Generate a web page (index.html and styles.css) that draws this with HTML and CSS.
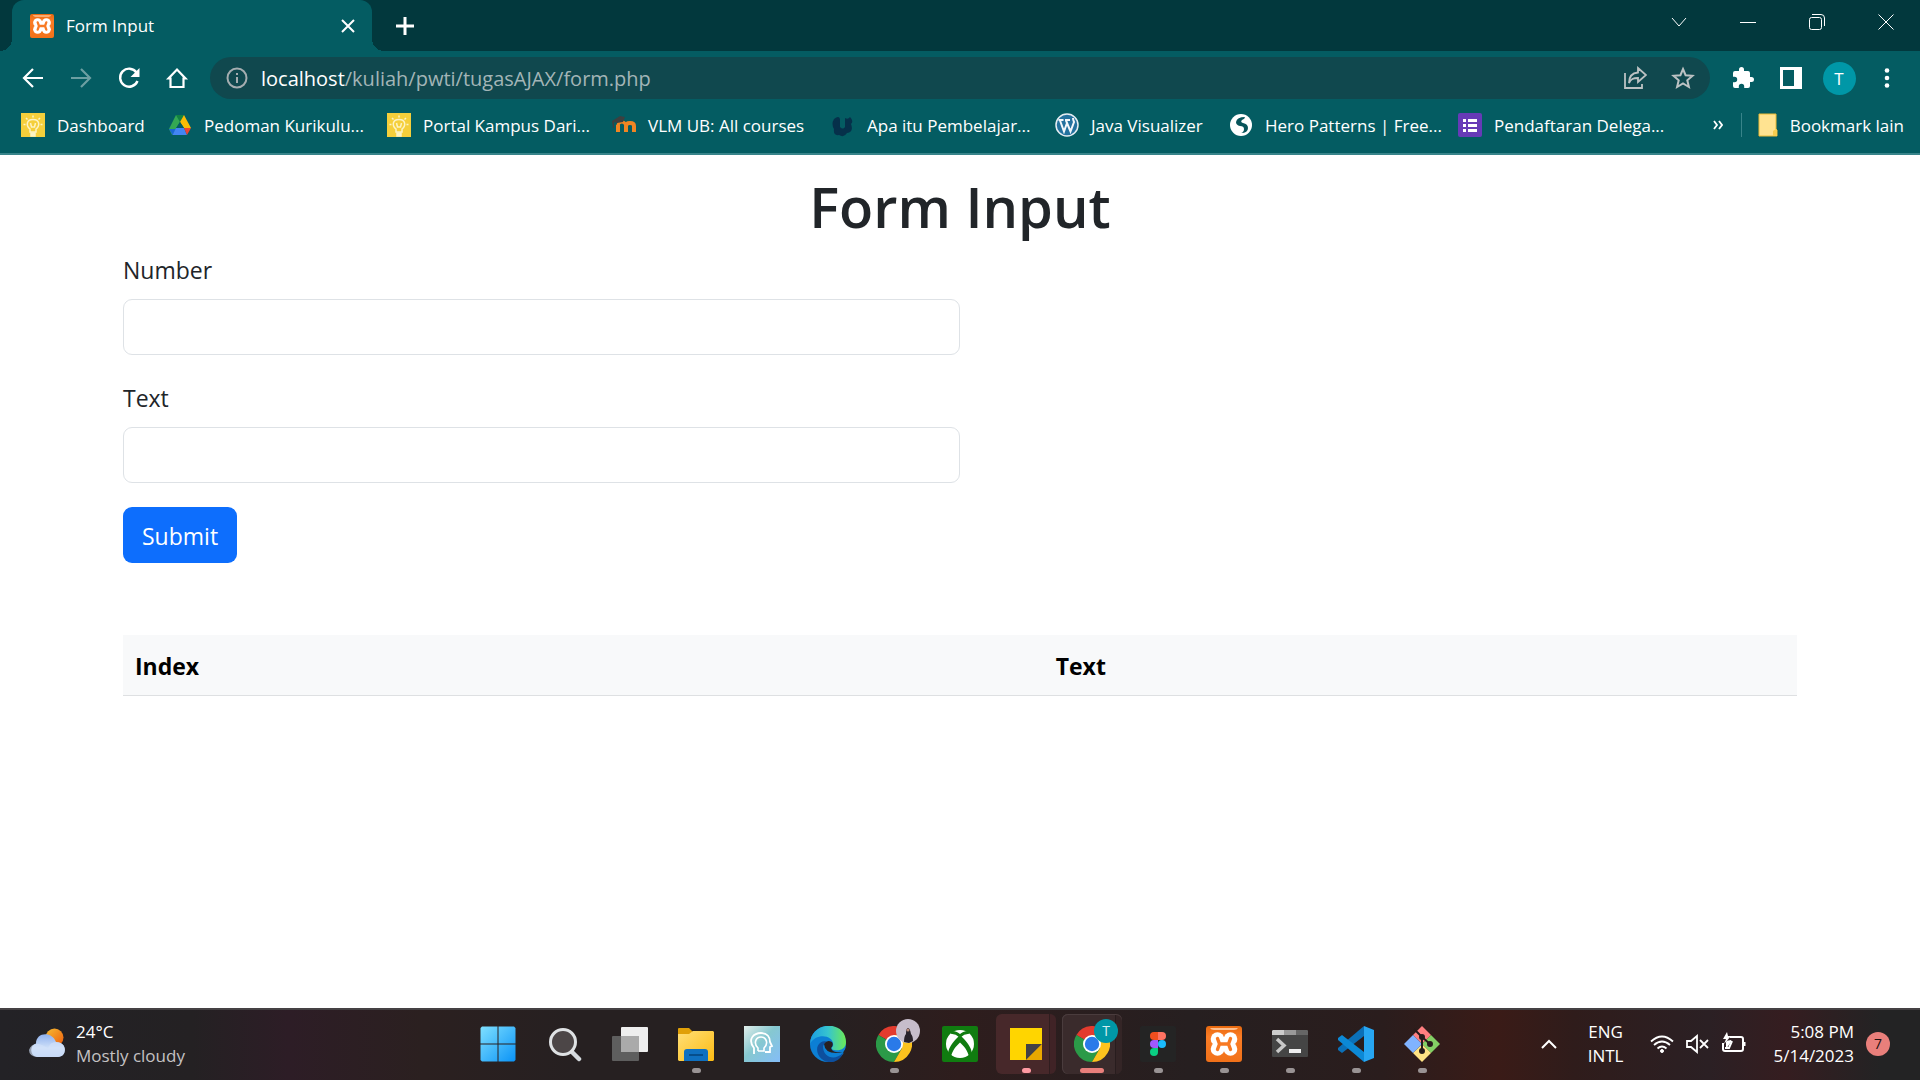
FILE: index.html
```html
<!DOCTYPE html>
<html lang="id">
<head>
<meta charset="utf-8">
<meta name="viewport" content="width=device-width, initial-scale=1">
<title>Form Input</title>
<link rel="stylesheet" href="styles.css">
</head>
<body>
<svg class="defs" aria-hidden="true">
  <defs>
    <linearGradient id="win" x1="0" y1="0" x2="1" y2="1"><stop offset="0" stop-color="#7fe0ff"/><stop offset="1" stop-color="#0a93f7"/></linearGradient>
    <linearGradient id="sun" x1="0" y1="0" x2="1" y2="1"><stop offset="0" stop-color="#f5bd33"/><stop offset="1" stop-color="#ee5b0c"/></linearGradient>
    <linearGradient id="cloud" x1="0" y1="0" x2="0" y2="1"><stop offset="0" stop-color="#8fb1ee"/><stop offset=".6" stop-color="#cfe0f8"/><stop offset="1" stop-color="#b3cbf3"/></linearGradient>
    <linearGradient id="folder" x1="0" y1="0" x2="1" y2="1"><stop offset="0" stop-color="#ffdf77"/><stop offset="1" stop-color="#fdbb13"/></linearGradient>
    <linearGradient id="head" x1="0" y1="0" x2="1" y2="1"><stop offset="0" stop-color="#e2eeea"/><stop offset=".45" stop-color="#86c8d0"/><stop offset="1" stop-color="#84bdf8"/></linearGradient>
    <linearGradient id="edgeTop" x1="0" y1="0" x2="1" y2="0"><stop offset="0" stop-color="#1b9de2"/><stop offset=".5" stop-color="#36c4cf"/><stop offset="1" stop-color="#6bea57"/></linearGradient>
    <linearGradient id="orange" x1="0" y1="0" x2="0" y2="1"><stop offset="0" stop-color="#e8690f"/><stop offset=".3" stop-color="#fb7d26"/><stop offset="1" stop-color="#f17119"/></linearGradient>
    <symbol id="bulb" viewBox="0 0 24 24">
      <rect width="24" height="24" fill="#f5cf3b"/>
      <g fill="none" stroke="#fdf3c4" stroke-width="1.5"><path d="M9 19v-3C5 13 5 6.500 12 6.500S19 13 15 16v3zM9.500 10l1 4h3l1-4M12 2.500v2M5 5l1.500 1.500M19 5l-1.500 1.500M2.500 11.500h2M19.500 11.500h2"/><path d="M10 20h4v3h-4z" fill="#fdf3c4"/></g>
    </symbol>
    <symbol id="chrome" viewBox="0 0 36 36">
      <path d="M18 18 2.400 9A18 18 0 0 1 33.600 9z" fill="#e33b2e"/>
      <path d="M18 18 2.400 9A18 18 0 0 0 18 36L25.800 22.500z" fill="#2b9a48"/>
      <path d="M18 9H33.600A18 18 0 0 1 18 36L25.800 22.500z" fill="#fcc31e"/>
      <circle cx="18" cy="18" r="9" fill="#fff"/><circle cx="18" cy="18" r="7.200" fill="#2a7ae9"/>
    </symbol>
    <symbol id="xampp" viewBox="0 0 36 36">
      <rect width="36" height="36" rx="3" fill="url(#orange)"/><path d="M4 2h28q-1 2-4 2H8q-3 0-4-2z" fill="#ffc08f"/>
      <g fill="#fff"><circle cx="11.500" cy="13" r="6.800"/><circle cx="24.500" cy="13" r="6.800"/><circle cx="11.500" cy="23" r="6.800"/><circle cx="24.500" cy="23" r="6.800"/><path d="M12 11h12v14H12z"/></g>
      <path d="M11.500 12.500 13.500 18l-2 5.500M24.500 12.500l-2 5.500 2 5.500M13.500 18h9" fill="none" stroke="#f87a24" stroke-width="3.400" stroke-linecap="round" stroke-linejoin="round"/>
    </symbol>
  </defs>
</svg>

<header class="browser">
  <div class="tabstrip">
    <div class="tab">
      <svg class="i24" aria-hidden="true"><use href="#xampp"/></svg>
      <span class="tab-title">Form Input</span>
      <button class="tab-close" aria-label="Tutup tab"><svg width="14" height="14" viewBox="0 0 14 14" stroke="#fff" stroke-width="2"><path d="m1 1 12 12M13 1 1 13"/></svg></button>
    </div>
    <button class="new-tab" aria-label="Tab baru"><svg width="18" height="18" viewBox="0 0 18 18" stroke="#fff" stroke-width="3"><path d="M9 0v18M0 9h18"/></svg></button>
    <div class="window-controls">
      <button aria-label="Telusuri tab"><svg width="16" height="16" viewBox="0 0 16 16"><path d="m1 4 7 8 7-8"/></svg></button>
      <button aria-label="Minimalkan"><svg width="16" height="16" viewBox="0 0 16 16"><path d="M0 8.500h16"/></svg></button>
      <button aria-label="Pulihkan"><svg width="16" height="16" viewBox="0 0 16 16"><rect x=".5" y="3.500" width="12" height="12" rx="2"/><path d="M3 .5h9q3.500 0 3.500 3.500v8"/></svg></button>
      <button aria-label="Tutup"><svg width="16" height="16" viewBox="0 0 16 16"><path d="m.5.500 15 15M15.500.500l-15 15"/></svg></button>
    </div>
  </div>

  <div class="toolbar">
    <div class="tools">
      <button aria-label="Kembali"><svg width="24" height="24" viewBox="0 0 24 24" fill="none" stroke="#fff" stroke-width="2.200"><path d="M22 12H3M12 3l-9 9 9 9"/></svg></button>
      <button aria-label="Maju"><svg width="24" height="24" viewBox="0 0 24 24" fill="none" stroke="#6c9fa2" stroke-width="2.200"><path d="M2 12h19M12 3l9 9-9 9"/></svg></button>
      <button aria-label="Muat ulang"><svg width="24" height="24" viewBox="0 0 24 24" fill="none" stroke="#fff" stroke-width="2.400"><path d="M19.500 6.500A9 9 0 1 0 20.500 15"/><path d="M22.500 2v9h-9z" fill="#fff" stroke="none"/></svg></button>
      <button aria-label="Beranda"><svg width="24" height="24" viewBox="0 0 24 24" fill="none" stroke="#fff" stroke-width="2.200"><path d="M3.500 12.500h2v8.500h13v-8.500h2L12 3.500z"/></svg></button>
    </div>
    <div class="omnibox">
      <svg width="22" height="22" viewBox="0 0 22 22" fill="none" stroke="#a5adb0" stroke-width="2" aria-hidden="true"><circle cx="11" cy="11" r="9.500"/><path d="M11 10v6M11 6v2"/></svg>
      <span class="url"><span class="host">localhost</span>/kuliah/pwti/tugasAJAX/form.php</span>
      <button aria-label="Bagikan"><svg width="24" height="24" viewBox="0 0 24 24" fill="none" stroke="#bcc2c3" stroke-width="1.800"><path d="M2 7v15h17v-4M15 2l8 7-8 7v-4c-5 0-7 1-9 5 0-6 3-10 9-10.500z"/></svg></button>
      <button aria-label="Tandai halaman"><svg width="24" height="24" viewBox="0 0 24 24" fill="none" stroke="#bcc2c3" stroke-width="2"><path d="m12 3 2.600 6.200 6.900.600-5.200 4.500 1.600 6.700-5.900-3.600L6.100 21l1.600-6.700-5.200-4.500 6.900-.600z"/></svg></button>
    </div>
    <div class="tools">
      <button aria-label="Ekstensi"><svg width="24" height="24" viewBox="0 0 24 24" fill="#fff"><path d="M20.500 11H19V7a2 2 0 0 0-2-2h-4V3.500a2.500 2.500 0 0 0-5 0V5H4a2 2 0 0 0-2 2v3.800h1.500a2.700 2.700 0 0 1 0 5.400H2V20a2 2 0 0 0 2 2h3.800v-1.500a2.700 2.700 0 0 1 5.400 0V22H17a2 2 0 0 0 2-2v-4h1.500a2.500 2.500 0 0 0 0-5z"/></svg></button>
      <button aria-label="Panel samping"><svg width="22" height="22" viewBox="0 0 22 22"><path fill="#fff" fill-rule="evenodd" d="M0 0h22v22H0zm3 3v16h11V3z"/></svg></button>
      <button aria-label="Profil"><span class="avatar">T</span></button>
      <button aria-label="Menu"><svg width="6" height="20" viewBox="0 0 6 20" fill="#fff"><circle cx="3" cy="2.500" r="2.300"/><circle cx="3" cy="10" r="2.300"/><circle cx="3" cy="17.500" r="2.300"/></svg></button>
    </div>
  </div>

  <nav class="bookmarks">
    <div class="bookmark-list">
      <a href="#"><svg class="i24"><use href="#bulb"/></svg>Dashboard</a>
      <a href="#"><svg class="i24" viewBox="0 0 24 24"><path d="M8 2h8l-4 7z" fill="#128240"/><path d="M8 2l4 7-8 13-3-6z" fill="#34a853"/><path d="M16 2l7 13h-7l-4-6z" fill="#fbbc05"/><path d="M1 16h7l-3.500 6z" fill="#1967d2"/><path d="M12 9l4 6H8z" fill="#045c62"/><path d="M8 15h8l3 7H4.500z" fill="#4285f4"/><path d="M16 15h7l-4 7z" fill="#ea4335"/></svg>Pedoman Kurikulu...</a>
      <a href="#"><svg class="i24"><use href="#bulb"/></svg>Portal Kampus Dari...</a>
      <a href="#"><svg class="i24" viewBox="0 0 24 24"><path d="M6 19v-7M14 19v-6q0-3 4-3t4 3v6" fill="none" stroke="#ef8523" stroke-width="4"/><path d="M6 14v-2q1-3 4-3t4 4" fill="none" stroke="#ef8523" stroke-width="3"/><path d="m0 8 8-5 5 1-2 5-6 1-3-1v6H1z" fill="#3c4040"/></svg>VLM UB: All courses</a>
      <a href="#"><svg class="i24" viewBox="0 0 24 24"><path d="M3 6q5-4 6 0v8q3 3 5 0V5q3 2 5-1 4 4 1 7 3 8-4 9-3 5-8 2-6 1-5-6-3-5 0-10z" fill="#06304a"/></svg>Apa itu Pembelajar...</a>
      <a href="#"><svg class="i24" viewBox="0 0 24 24"><circle cx="12" cy="12" r="11" fill="#23719e" stroke="#e5edf2" stroke-width="1.500"/><path d="M3.500 7h5M10 7h5M5 7.500 9 18.500 12 10M11 7.500 15.500 18.500 19 9q-1-2-1-4" fill="none" stroke="#f2f7fa" stroke-width="2"/></svg>Java Visualizer</a>
      <a href="#"><svg class="i24" viewBox="0 0 24 24"><circle cx="12" cy="12" r="11" fill="#fff"/><path d="M16 4q-8 0-9 5 0 3 4 4 4 0 4 3t-3 4q7 0 7-5 0-4-5-5-3-1-1-3 3-1 3-3z" fill="#07545a"/></svg>Hero Patterns | Free...</a>
      <a href="#"><svg class="i24" viewBox="0 0 24 24"><rect width="24" height="24" rx="2" fill="#673ab7"/><path d="M5 7.500h3M10 7.500h9M5 12.500h3M10 12.500h9M5 17.500h3M10 17.500h9" stroke="#fff" stroke-width="3"/></svg>Pendaftaran Delega...</a>
    </div>
    <button class="more" aria-label="Bookmark lainnya"><svg width="10" height="10" viewBox="0 0 10 10" fill="none" stroke="#fff" stroke-width="1.800"><path d="m1 1 3 4-3 4M6 1l3 4-3 4"/></svg></button>
    <a class="other" href="#"><svg width="20" height="24" viewBox="0 0 20 24"><path d="M1 1h17v15l1 1v6H1z" fill="#ffe391" stroke="#edbb35"/><path d="M15 23v-5l3-2 1 1v6z" fill="#f8cd4e"/></svg>Bookmark lain</a>
  </nav>
</header>

<main class="page">
  <div class="container">
    <h1>Form Input</h1>
    <form>
      <div class="field"><label for="number">Number</label><input id="number" type="number"></div>
      <div class="field"><label for="text">Text</label><input id="text" type="text"></div>
      <button class="submit" type="button">Submit</button>
    </form>
    <table>
      <thead><tr><th class="col-index" scope="col">Index</th><th scope="col">Text</th></tr></thead>
    </table>
  </div>
</main>

<footer class="taskbar">
  <div class="weather">
    <svg width="36" height="36" viewBox="0 0 36 36" aria-hidden="true"><circle cx="25.500" cy="11.500" r="9" fill="url(#sun)"/><path d="M8 31a7 7 0 0 1-1-13.500C7 6 23 5 27 16c12 0 11 15 2 15z" fill="url(#cloud)"/><path d="M19 22q2-6 8-6c12 0 11 15 2 15H8q-8-1-8-7 2-7 10-6 6 2 8 4z" fill="#d3e2f9" opacity=".65"/></svg>
    <div><div>24°C</div><div class="dim">Mostly cloudy</div></div>
  </div>

  <div class="apps">
    <button aria-label="Start"><svg class="i36" viewBox="0 0 36 36" fill="url(#win)"><path d="M2 .5h15.500v17H.5V2zM18.500.500H34L35.500 2v15.500h-17zM.5 18.500h17v17H2L.5 34zM18.500 18.500h17V34L34 35.500H18.500z"/></svg></button>
    <button aria-label="Search"><svg class="i36" viewBox="0 0 36 36"><path d="m25 25 8 8" stroke="#d5dade" stroke-width="4.500" stroke-linecap="round"/><circle cx="17" cy="16" r="12.500" fill="#4c4647" stroke="#dfe2e4" stroke-width="3"/></svg></button>
    <button aria-label="Task view"><svg class="i36" viewBox="0 0 36 36"><rect x="9" y="1" width="27" height="25" rx="1" fill="#eee"/><rect y="10" width="27" height="25" rx="1" fill="#666" opacity=".88"/><path d="M9 10h18v16H9z" fill="#aaa"/></svg></button>
    <button class="running" aria-label="File Explorer"><svg class="i36" viewBox="0 0 36 36"><path d="M0 3q0-1 1-1h10l4 4-3 4H0z" fill="#e0a008"/><path d="M0 8h11l4-3h20l1 1v28l-1 1H1l-1-1z" fill="url(#folder)"/><path d="M6 35V26q0-3 3-3h18q3 0 3 3v9z" fill="#0f70c0"/><path d="M11 29h14" stroke="#064e8c" stroke-width="2"/></svg></button>
    <button aria-label="Assistant"><svg class="i36" viewBox="0 0 36 36"><path d="M0 0h36v36H0z" fill="url(#head)"/><path d="M10 28v-6C3 13 10 7 17 7c6 0 9 4 9 9l2 4-2 1v5h-5" fill="none" stroke="#fff" stroke-width="1.800"/><path d="M14 25v-3c-5-5-2-11 3-11s8 6 3 11v3h-6" fill="none" stroke="#fff" stroke-width="1.600"/></svg></button>
    <button aria-label="Edge"><svg class="i36" viewBox="0 0 36 36"><circle cx="18" cy="18" r="18" fill="#0c7fd4"/><path d="M13 20c0 12 12 15 20 7-4 12-20 12-25 1-3-8 2-13 8-13z" fill="#0d4f9e"/><path d="M0 18C1-6 36-6 36 16c0 7-6 9-12 8-3-1-3-2-1-4C25 9 6 6 0 18z" fill="url(#edgeTop)"/><path d="M14 18q3-5 8-2 2 3-1 6 1 5 12 4.500l3-4.500v6l-3-1.500q-18 3-19-8.500z" fill="#272022"/></svg></button>
    <button class="running" aria-label="Chrome"><svg class="i36"><use href="#chrome"/></svg><svg class="profile" viewBox="0 0 24 24"><circle cx="12" cy="12" r="12" fill="#c7bdcb"/><path d="M8 23q0-6 2-8 0-6 2-6t3 6q2 2 2 7l-4 2z" fill="#29222a"/><circle cx="12" cy="11" r="1.500" fill="#ba8c7a"/></svg></button>
    <button aria-label="Xbox"><svg class="i36" viewBox="0 0 36 36"><rect width="36" height="36" rx="2" fill="#107c10"/><circle cx="18" cy="18" r="14" fill="#fff"/><path d="M9 6.500c4-.5 6.500 1 9 3.500 2.500-2.500 5-4 9-3.500" fill="none" stroke="#107c10" stroke-width="3"/><path d="M18 9l4 4c5 5 8 11 8 15l-3 3c-1-6-5-11-9-14.500C14 20 10 25 9 31l-3-3c0-4 3-10 8-15z" fill="#107c10"/></svg></button>
    <button class="running grouped sticky" aria-label="Sticky Notes"><svg class="i36" viewBox="0 0 36 36"><path d="M2 2h32v16l-16 16H2z" fill="#ffd500"/><path d="M18 34V18h16z" fill="#434245"/><path d="M34 18v16H18z" fill="#e9a800"/></svg></button>
    <button class="running grouped active" aria-label="Chrome, T"><svg class="i36"><use href="#chrome"/></svg><span class="profile letter">T</span></button>
    <button class="running" aria-label="Figma"><svg class="i36" viewBox="0 0 36 36"><rect width="36" height="36" rx="2" fill="#242424"/><path d="M18 6h-4a4 4 0 0 0 0 8h4z" fill="#f24e1e"/><path d="M18 6h4a4 4 0 0 1 0 8h-4z" fill="#ff7262"/><path d="M18 14h-4a4 4 0 0 0 0 8h4z" fill="#a259ff"/><circle cx="22" cy="18" r="4" fill="#1abcfe"/><path d="M18 22h-4a4 4 0 1 0 4 4z" fill="#0acf83"/></svg></button>
    <button class="running" aria-label="XAMPP"><svg class="i36"><use href="#xampp"/></svg></button>
    <button class="running" aria-label="Terminal"><svg class="i36" viewBox="0 0 36 36"><rect y="4" width="36" height="27" rx="1" fill="#454545"/><path d="M0 9V5l1-1h11v5z" fill="#ccc"/><path d="M12 4h12v5H12z" fill="#999"/><path d="M24 4h11l1 1v4H24z" fill="#666"/><path d="m5 13 7 6.500L5 26" fill="none" stroke="#c8c8c8" stroke-width="3.500"/><path d="M17 25h12" stroke="#eee" stroke-width="4"/></svg></button>
    <button class="running" aria-label="Visual Studio Code"><svg class="i36" viewBox="0 0 36 36"><path d="M26 10 4 27l-4-3v-2L26 0z" fill="#0b70b8"/><path d="M26 26 4 9l-4 3v2l26 22z" fill="#0c89d6"/><path d="m26 0 10 4v28l-10 4z" fill="#27a6f2"/></svg></button>
    <button class="running" aria-label="Git"><svg class="i36" viewBox="0 0 36 36"><path d="m18 0 9 9-9 9-9-9z" fill="#ff7f80"/><path d="m27 9 9 9-9 9-9-9z" fill="#83d064"/><path d="m18 18 9 9-9 9-9-9z" fill="#ffe384"/><path d="m9 9 9 9-9 9-9-9z" fill="#80b3ff"/><g fill="#271c1c" stroke="#271c1c" stroke-width="2"><path d="m10 3 8 8v14M18 11l8 7" fill="none"/><circle cx="18" cy="11" r="2"/><circle cx="18" cy="25" r="2"/><circle cx="26" cy="18" r="2"/></g></svg></button>
  </div>

  <div class="tray">
    <button class="chevron" aria-label="Ikon tersembunyi"><svg width="16" height="10" viewBox="0 0 16 10" fill="none" stroke="#fff" stroke-width="2"><path d="m1 9 7-7 7 7"/></svg></button>
    <div class="lang">ENG<br>INTL</div>
    <div class="status">
      <svg class="i24" viewBox="0 0 24 24" fill="none" stroke="#fff" stroke-width="1.800"><path d="M1 9.500q11-10 22 0M4 13q8-7 16 0M7.500 16.500q4.500-4 9 0"/><circle cx="12" cy="19" r="1.500" fill="#fff" stroke-width="1"/></svg>
      <svg class="i24" viewBox="0 0 24 24" fill="none" stroke="#fff" stroke-width="1.800"><path d="M1 9h4l6-5v16l-6-5H1zM14 8l8 8M22 8l-8 8"/></svg>
      <svg class="i24" viewBox="0 0 24 24" fill="none" stroke="#fff" stroke-width="2"><path d="M8 5h11q2 0 2 2v10q0 2-2 2H3q-2 0-2-2v-6"/><path d="M4 16V9l5-1v2l-5 7zM5 0 1 7h3L2 12l7-8H6z" fill="#fff" stroke="none"/><path d="M22.500 10v4M3 16h4l3-7"/></svg>
    </div>
    <div class="clock">5:08 PM<br>5/14/2023</div>
    <span class="badge">7</span>
  </div>
</footer>
</body>
</html>
```

FILE: styles.css
```css
* { box-sizing: border-box; }

body {
  margin: 0;
  min-height: 100vh;
  display: flex;
  flex-direction: column;
  background: #fff;
  color: #212529;
  font-family: "Open Sans", "Noto Sans", sans-serif;
}

button {
  margin: 0;
  padding: 0;
  border: 0;
  background: none;
  font: inherit;
  color: inherit;
}

svg { display: block; flex: none; }
a { color: inherit; text-decoration: none; }
.defs { position: absolute; width: 0; height: 0; }
.i24 { width: 24px; height: 24px; }
.i36 { width: 36px; height: 36px; }

/* Browser frame */
.browser {
  background: #045c62;
  border-bottom: 2px solid #38848a;
  color: #fff;
  font-size: 17px;
}

.tabstrip {
  display: flex;
  height: 51px;
  padding-left: 12px;
  background: #02383d;
}

.tab {
  position: relative;
  display: flex;
  align-items: center;
  gap: 12px;
  width: 360px;
  padding: 0 17px 0 18px;
  border-radius: 12px 12px 0 0;
  background: #045c62;
}

.tab::before,
.tab::after {
  content: "";
  position: absolute;
  bottom: 0;
  width: 12px;
  height: 12px;
}
.tab::before { right: 100%; background: radial-gradient(circle at 0 0, #02383d 12px, #045c62 12px); }
.tab::after { left: 100%; background: radial-gradient(circle at 100% 0, #02383d 12px, #045c62 12px); }

.tab-title { flex: 1; }
.new-tab { padding: 0 24px; }

.window-controls {
  display: flex;
  height: 43px;
  margin-left: auto;
}
.window-controls button {
  display: grid;
  place-items: center;
  width: 69px;
}
.window-controls svg { fill: none; stroke: #fff; }

.toolbar {
  display: flex;
  align-items: center;
  gap: 9px;
  padding: 6px 9px;
}
.tools { display: flex; }
.tools button {
  display: grid;
  place-items: center;
  width: 48px;
  height: 42px;
}
.avatar {
  display: grid;
  place-items: center;
  width: 33px;
  height: 33px;
  border-radius: 50%;
  background: #0097a7;
}

.omnibox {
  flex: 1;
  display: flex;
  align-items: center;
  gap: 24px;
  height: 42px;
  padding: 0 15px 0 16px;
  border-radius: 21px;
  background: #10484e;
}
.url {
  flex: 1;
  margin-left: -11px;
  color: #a3b5b7;
  font-size: 20px;
}
.host { color: #fff; }

.bookmarks {
  display: flex;
  align-items: center;
  height: 48px;
  padding: 0 16px 8px 21px;
}
.bookmark-list {
  flex: 1;
  display: grid;
  grid-template-columns: 147px 219px 225px 219px 224px 174px 229px auto;
  white-space: nowrap;
}
.bookmarks a {
  display: flex;
  align-items: center;
  gap: 12px;
}
.more { padding: 0 18px 0 16px; }
.bookmarks .other {
  padding-left: 16px;
  border-left: 1px solid #38848a;
  white-space: nowrap;
}

/* Web page */
.page { flex: 1; padding: 15px 24px; }
.container { max-width: 1674px; margin: 0 auto; }

h1 {
  margin: 0 0 9px;
  font-size: 56px;
  font-weight: 600;
  line-height: 72px;
  text-align: center;
}

.field { width: 50%; margin-bottom: 24px; }
label {
  display: block;
  margin-bottom: 10px;
  font-size: 23px;
  line-height: 38px;
}
input {
  display: block;
  width: 100%;
  height: 56px;
  padding: 9px 18px;
  border: 1px solid #dee2e6;
  border-radius: 9px;
  background: #fff;
  font: inherit;
  font-size: 23px;
}

.submit {
  height: 56px;
  padding: 2px 19px 0;
  border-radius: 9px;
  background: #0d6efd;
  color: #fff;
  font-size: 23px;
}

table {
  width: 100%;
  margin-top: 72px;
  border-collapse: separate;
  border-spacing: 0;
  table-layout: fixed;
}
th {
  padding: 12px 12px 10px;
  border-bottom: 1px solid #dee0e2;
  background: #f8f9fa;
  color: #000;
  font-size: 23px;
  line-height: 38px;
  text-align: left;
}
.col-index { width: 55%; }

/* Taskbar */
.taskbar {
  display: grid;
  grid-template-columns: 1fr auto 1fr;
  align-items: center;
  height: 72px;
  padding-bottom: 2px;
  border-top: 2px solid #454144;
  background: linear-gradient(90deg, #232226 0, #242123 10%, #2d1d26 15%, #2b2020 22%, #262021 30%, #262021 43%, #2e1d1d 50%, #261f20 62%, #2a1d1d 72%, #3a1b17 78%, #2f1c1b 82%, #2b2024 89%, #351d20 93%, #232324 98%);
  color: #fff;
  font-size: 17px;
  line-height: 24px;
}

.weather {
  display: flex;
  align-items: center;
  gap: 11px;
  padding-left: 29px;
}
.dim { color: #c5c2c3; }

.apps { display: flex; gap: 6px; }
.apps button {
  position: relative;
  display: grid;
  place-items: center;
  width: 60px;
  height: 60px;
  border-radius: 6px;
}
.running::after {
  content: "";
  position: absolute;
  bottom: 1px;
  width: 9px;
  height: 5px;
  border-radius: 3px;
  background: #999394;
}
.sticky { background: linear-gradient(90deg, #47282a 53px, #301d1f 53px, #301d1f 54px, #402326 54px); }
.active {
  background: linear-gradient(90deg, #3a2b2c 53px, #281d1e 53px, #281d1e 54px, #342526 54px);
  box-shadow: inset 0 1px #4a3c3d, inset 1px 0 #4a3c3d;
}
.sticky::after { background: #ff9aa2; }
.active::after { width: 24px; background: #e97f7b; }

.profile {
  position: absolute;
  top: 5px;
  right: 4px;
  width: 24px;
  height: 24px;
}
.letter {
  border-radius: 50%;
  background: #0097a7;
  color: #d5eef0;
  font-size: 14px;
}

.tray {
  display: flex;
  align-items: center;
  justify-content: flex-end;
  padding-right: 30px;
}
.lang { margin: 0 27px 0 31px; text-align: center; }
.status { display: flex; gap: 12px; }
.clock { margin: 0 12px 0 27px; text-align: right; }
.badge {
  display: grid;
  place-items: center;
  width: 24px;
  height: 24px;
  border-radius: 50%;
  background: #e97f7b;
  color: #1b1010;
  font-size: 14px;
}
```
